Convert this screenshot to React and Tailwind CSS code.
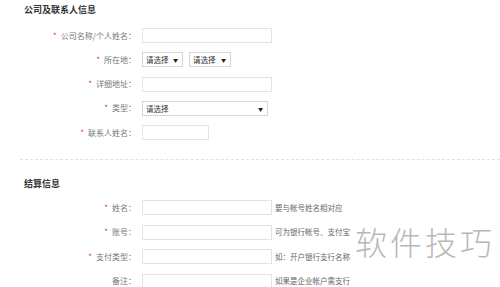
import React from "react";

const font = { fontFamily: '"Microsoft YaHei", "Noto Sans CJK SC", sans-serif' };

function Label({ text, required }) {
  return (
    <div className="w-[142px] shrink-0 text-right text-[8px] text-[#777] pr-[6px] leading-none whitespace-nowrap">
      {required && <span className="text-[#e4393c] mr-[4px]">*</span>}
      {text}：
    </div>
  );
}

function Input({ w = "w-[130px]" }) {
  return <div className={`${w} h-[15px] border border-[#dde4ea] bg-white`} />;
}

function Select({ w, text = "请选择" }) {
  return (
    <div className={`${w} h-[15px] border border-[#d6d6d6] bg-white flex items-center justify-between pl-[3px] pr-[4px] text-[7.5px] text-[#333] whitespace-nowrap leading-none`}>
      <span>{text}</span>
      <span className="text-[5px] text-[#222]">▼</span>
    </div>
  );
}

function Row({ label, required, children, hint }) {
  return (
    <div className="flex items-center h-[15px]">
      <Label text={label} required={required} />
      {children}
      {hint && <span className="ml-[3px] text-[7.5px] text-[#666] whitespace-nowrap leading-none">{hint}</span>}
    </div>
  );
}

export default function App() {
  return (
    <div className="relative w-[500px] h-[287px] bg-white overflow-hidden" style={font}>
      <div className="pl-[24px] pt-[4px] text-[9px] font-bold text-[#333] leading-[12px]">
        公司及联系人信息
      </div>
      <div className="pt-[12px] flex flex-col gap-[9.25px]">
        <Row label="公司名称/个人姓名" required>
          <Input />
        </Row>
        <Row label="所在地" required>
          <div className="flex gap-[6px]">
            <Select w="w-[41px]" />
            <Select w="w-[42px]" />
          </div>
        </Row>
        <Row label="详细地址" required>
          <Input />
        </Row>
        <Row label="类型" required>
          <Select w="w-[126px]" />
        </Row>
        <Row label="联系人姓名" required>
          <Input w="w-[67px]" />
        </Row>
      </div>
      <div className="ml-[20px] mt-[19px] border-t border-dashed border-[#e2e2e2]" />
      <div className="pl-[24px] pt-[18px] text-[9px] font-bold text-[#333] leading-[12px]">
        结算信息
      </div>
      <div className="pt-[10px] flex flex-col gap-[9.5px]">
        <Row label="姓名" required hint="要与帐号姓名相对应">
          <Input />
        </Row>
        <Row label="账号" required hint="可为银行帐号、支付宝">
          <Input />
        </Row>
        <Row label="支付类型" required hint="如：开户银行支行名称">
          <Input />
        </Row>
        <Row label="备注" hint="如果是企业帐户需支行">
          <Input />
        </Row>
      </div>
      <div className="absolute left-[355px] top-[225px] text-[32px] font-light tracking-[3px] text-[#b8b8b8] leading-none">
        软件技巧
      </div>
    </div>
  );
}
